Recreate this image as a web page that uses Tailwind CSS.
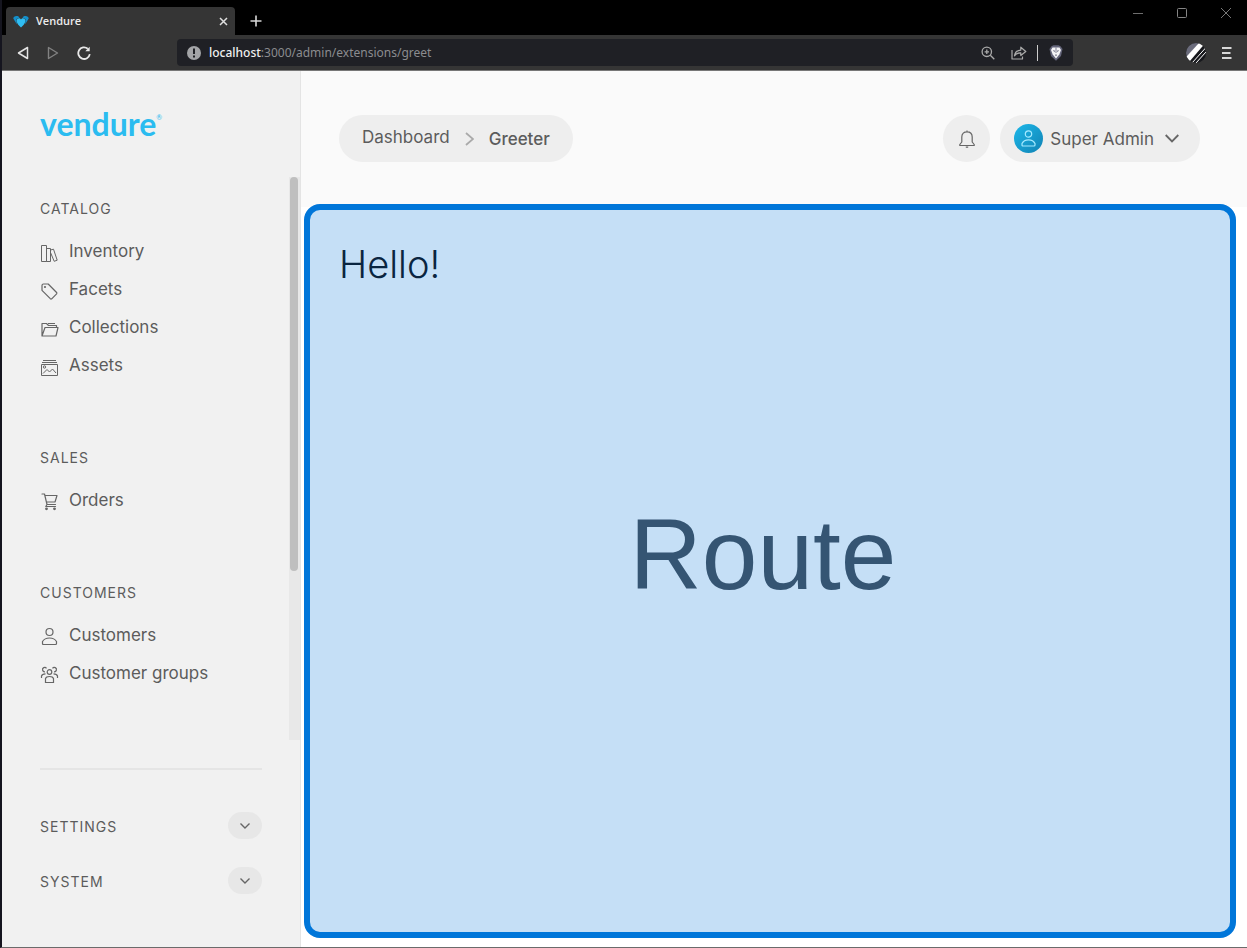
<!DOCTYPE html>
<html lang="en">
<head>
<meta charset="utf-8">
<meta name="viewport" content="width=device-width, initial-scale=1">
<title>Vendure</title>
<script src="https://cdn.jsdelivr.net/npm/@tailwindcss/browser@4"></script>
</head>
<body class="flex min-h-screen flex-col border-b border-l-2 border-b-[#6b6b6b] border-l-[#15151f] bg-white font-['Inter',sans-serif] text-[#5c5c5c]">

<!-- Browser window -->
<div class="flex h-[35px] shrink-0 bg-black text-[#d8d8d8]">
  <div class="ml-1 mt-[7px] flex w-[229px] items-center rounded-t-sm bg-[#353535] pr-[7px] pl-[7px]">
    <svg class="h-[13px] w-4" viewBox="0 0 16 13"><path d="M0.300 3.600C0.300 1.500 3 0.400 5.500 1.500L6.500 2.500 3.500 4 3.800 9.300Z" fill="#1390cc"/><path d="M15.700 3.600C15.700 1.500 13 0.400 10.500 1.500L9.500 2.500 12.500 4 12.200 9.300Z" fill="#1390cc"/><path d="M8 4.600C9 2.600 12 3 12.300 5.400C12.500 8.400 10 10.600 8 12.400C6 10.600 3.500 8.400 3.700 5.400C4 3 7 2.600 8 4.600Z" fill="#30bdf2"/></svg>
    <span class="ml-[7px] flex-1 font-['Open_Sans',sans-serif] text-[11px] font-semibold text-[#ececec]">Vendure</span>
    <button aria-label="Close tab"><svg class="size-[9px]" viewBox="0 0 9 9" fill="none" stroke="#e0e0e0" stroke-width="1.500"><path d="M1 1 8 8M8 1 1 8"/></svg></button>
  </div>
  <button class="ml-[15px] mt-[7px]" aria-label="New tab"><svg class="size-3" viewBox="0 0 12 12" fill="none" stroke="#d8d8d8" stroke-width="1.600"><path d="M6 0.500V11.500M0.500 6H11.500"/></svg></button>
  <div class="ml-auto flex h-[25px] items-center gap-[34px] pr-4">
    <button aria-label="Minimize"><svg class="size-[10px]" viewBox="0 0 10 10" fill="none" stroke="#6e6e6e"><path d="M0 5.500H10"/></svg></button>
    <button aria-label="Maximize"><svg class="size-[10px]" viewBox="0 0 10 10" fill="none" stroke="#858585"><rect x="0.500" y="0.500" width="9" height="9" rx="1"/></svg></button>
    <button aria-label="Close"><svg class="size-[10px]" viewBox="0 0 10 10" fill="none" stroke="#777"><path d="M0 0 10 10M10 0 0 10"/></svg></button>
  </div>
</div>
<div class="flex h-9 shrink-0 items-center border-b border-[#777] bg-[#353535]">
  <div class="flex w-[175px] items-center gap-[18px] pl-[15px]">
    <button aria-label="Back"><svg class="h-[14px] w-3" viewBox="0 0 12 14" fill="none" stroke="#e4e4e4" stroke-width="1.500" stroke-linejoin="round"><path d="M10.500 1.500V12.500L1.500 7Z"/></svg></button>
    <button aria-label="Forward"><svg class="h-[14px] w-3" viewBox="0 0 12 14" fill="none" stroke="#828282" stroke-width="1.400" stroke-linejoin="round"><path d="M1.500 1.500V12.500L10.500 7Z"/></svg></button>
    <button aria-label="Reload"><svg class="size-[14px]" viewBox="0 0 14 14" fill="none" stroke="#e8e8e8" stroke-width="1.800"><path d="M12.800 8.200A5.800 5.800 0 1 1 10.800 2.700"/><path d="M12.700 0.800V5.200H8.300Z" fill="#e8e8e8" stroke="none"/></svg></button>
  </div>
  <div class="flex h-[27px] flex-1 items-center rounded bg-[#1f2025] px-[10px]">
    <svg class="size-[14px]" viewBox="0 0 14 14"><circle cx="7" cy="7" r="7" fill="#a3a4a7"/><path d="M6 2.500H8V8H6ZM6 9.500H8V11.500H6Z" fill="#1f2025"/></svg>
    <span class="ml-2 flex-1 font-['Noto_Sans',sans-serif] text-[12px] text-[#8b8c8f]"><span class="font-medium text-[#f0f0f0]">localhost</span>:3000/admin/extensions/greet</span>
    <button aria-label="Zoom"><svg class="size-[14px]" viewBox="0 0 14 14" fill="none" stroke="#aaa" stroke-width="1.300"><circle cx="5.800" cy="5.800" r="4.700"/><path d="M9.300 9.300 13.300 13.300M3.600 5.800H8M5.800 3.600V8"/></svg></button>
    <button class="ml-4" aria-label="Share"><svg class="h-[14px] w-4" viewBox="0 0 16 14" fill="none" stroke="#aaa" stroke-width="1.200" stroke-linejoin="round"><path d="M1 4V13H11.500V10.500"/><path d="M3.500 9.800C4 6 6.500 4.200 9.800 4.100V1.200L14.800 5.500L9.800 9.500V6.800C7 6.700 5 7.600 3.500 9.800Z"/></svg></button>
    <span class="ml-[10px] h-4 w-px bg-[#ccc]"></span>
    <button class="ml-[11px]" aria-label="Brave Shields"><svg class="h-4 w-[14px]" viewBox="0 0 14 16"><path d="M2.500 1.200 4.500 0.300H9.500L11.500 1.200 13.500 4 12 11 7 15.800 2 11 0.500 4Z" fill="#63647a"/><path d="M3.500 2.500H10.500L12 5 10.300 9.500 7 13.500 3.700 9.500 2 5Z" fill="#f4f4f6"/><path d="M4 5 6 5.800 5.300 7.300ZM10 5 8 5.800 8.700 7.300ZM6 10 7 9.300 8 10 7 11.200ZM6.600 2.500H7.400V8H6.600Z" fill="#63647a"/></svg></button>
  </div>
  <div class="flex w-[174px] items-center justify-end gap-4 pr-[15px]">
    <button aria-label="Profile"><svg class="size-5" viewBox="0 0 20 20"><defs><clipPath id="disc"><circle cx="10" cy="10" r="10"/></clipPath></defs><g clip-path="url(#disc)"><path d="M0 0H20V20H0Z" fill="#17181c"/><path d="M0 0H14L0 14Z" fill="#6b6c7c"/><path d="M0 14 13 0 18.500 1 3.500 18.500Z" fill="#fff"/><path d="M6 20 20 4.500M10 20 20 9" stroke="#fff" stroke-width="1"/></g></svg></button>
    <button aria-label="Menu"><svg class="h-3 w-[10px]" viewBox="0 0 10 12" stroke="#d8d8d8" stroke-width="1.800"><path d="M0 1H9.500M0 6H8.500M0 11H9.500"/></svg></button>
  </div>
</div>

<!-- Application -->
<div class="flex flex-1">
  <aside class="flex w-[299px] shrink-0 flex-col border-r border-[#e4e4e4] bg-[#f1f1f1]">
    <a href="#" class="ml-[38px] mt-9 flex h-[70px] items-start self-start font-['Lato',sans-serif] text-[32px] leading-[34px] font-bold text-[#2bbcf0]" aria-label="Vendure home">vendure<span class="mt-1 text-[7px] leading-3 font-normal">®</span></a>
    <div class="flex h-[563px] justify-between">
      <nav class="pl-[38px] pt-[22px] text-[17px]">
        <section class="mb-[63px]">
          <h2 class="mb-[14px] text-[14px] leading-5 tracking-[1px]">CATALOG</h2>
          <ul>
            <li><a href="#" class="flex h-[38px] items-center gap-[10px]"><svg class="mt-0.5 size-[19px]" viewBox="0 0 19 19" fill="none" stroke="#666" stroke-linejoin="round"><path d="M1.500 1.500H6.500V17.500H1.500ZM6.500 4.500H10.500V17.500H6.500ZM10.500 6 13.500 5.200 17.200 16.200 14.200 17.300 10.500 8.500Z"/></svg>Inventory</a></li>
            <li><a href="#" class="flex h-[38px] items-center gap-[10px]"><svg class="mt-0.5 size-[19px]" viewBox="0 0 19 19" fill="none" stroke="#666" stroke-width="1.200" stroke-linejoin="round"><path d="M2 3.500Q2 2 3.500 2H8.200L16.600 10.500Q17.200 11.200 16.600 11.900L11.700 16.800Q11 17.300 10.300 16.700L2 8.300Z"/><circle cx="5" cy="5" r="0.500"/></svg>Facets</a></li>
            <li><a href="#" class="flex h-[38px] items-center gap-[10px]"><svg class="mt-0.5 size-[19px]" viewBox="0 0 19 19" fill="none" stroke="#666" stroke-width="1.200" stroke-linejoin="round"><path d="M2 16V3.500H6.500L8.500 5.500H16.500V7.500M2 16 5 7.500H18L16 16ZM8 3.500H15"/></svg>Collections</a></li>
            <li><a href="#" class="flex h-[38px] items-center gap-[10px]"><svg class="mt-0.5 size-[19px]" viewBox="0 0 19 19" fill="none" stroke="#666" stroke-linejoin="round"><path d="M1.500 6.500H17.500V17.500H1.500ZM2 4.500H17M3 2.500H16M3 15.500 7 11.500 9.500 14 12.500 11 16 15"/><circle cx="4.500" cy="9" r="1.200"/></svg>Assets</a></li>
          </ul>
        </section>
        <section class="mb-[63px]">
          <h2 class="mb-[14px] text-[14px] leading-5 tracking-[1px]">SALES</h2>
          <ul>
            <li><a href="#" class="flex h-[38px] items-center gap-[10px]"><svg class="size-[19px]" viewBox="0 0 19 19" fill="none" stroke="#666" stroke-width="1.200" stroke-linejoin="round" stroke-linecap="round"><path d="M2 2H4.500L7 12.500H15.500M5 3.500H17L15 10H6.500M7 12.500 5.800 14.500H15.500"/><circle cx="6.500" cy="16.800" r="0.800" fill="#666"/><circle cx="14.500" cy="16.800" r="0.800" fill="#666"/></svg>Orders</a></li>
          </ul>
        </section>
        <section>
          <h2 class="mb-[14px] text-[14px] leading-5 tracking-[1px]">CUSTOMERS</h2>
          <ul>
            <li><a href="#" class="flex h-[38px] items-center gap-[10px]"><svg class="size-[19px]" viewBox="0 0 19 19" fill="none" stroke="#666" stroke-width="1.200"><circle cx="9.500" cy="5" r="3.500"/><path d="M2.500 16.500V14.500C4 12 6.500 11 9.500 11S15 12 16.500 14.500V16.500Q16.500 17.500 15.500 17.500H3.500Q2.500 17.500 2.500 16.500Z"/></svg>Customers</a></li>
            <li><a href="#" class="flex h-[38px] items-center gap-[10px]"><svg class="size-[19px]" viewBox="0 0 19 19" fill="none" stroke="#666" stroke-width="1.200"><circle cx="9.500" cy="7" r="2.300"/><path d="M5.500 17.500V13.500Q6 11.500 9.500 11.500T13.500 13.500V17.500ZM6.500 3.300A2.200 2.200 0 1 0 5 6.800M12.500 3.300A2.200 2.200 0 1 1 14 6.800M1.500 13V11Q2 8.800 5.500 8.800M17.500 13V11Q17 8.800 13.500 8.800"/></svg>Customer groups</a></li>
          </ul>
        </section>
      </nav>
      <div class="w-[11px] bg-[#e8e8e8] px-px"><div class="h-[70%] w-2 rounded-full bg-[#bfbfbf]"></div></div>
    </div>
    <div class="mx-[38px] mt-7 border-t-2 border-[#e5e5e5] pt-[42px] text-[14px] leading-5 tracking-[1px]">
      <div class="flex items-center justify-between"><h2 class="pt-0.5">SETTINGS</h2>
        <button aria-label="Expand settings" class="flex h-[27px] w-[34px] items-center justify-center rounded-full bg-[#e7e7e7]"><svg class="h-[6px] w-[10px]" viewBox="0 0 10 6" fill="none" stroke="#666" stroke-width="1.400"><path d="M0.500 0.500 5 5 9.500 0.500"/></svg></button></div>
      <div class="mt-[28px] flex items-center justify-between"><h2 class="pt-0.5">SYSTEM</h2>
        <button aria-label="Expand system" class="flex h-[27px] w-[34px] items-center justify-center rounded-full bg-[#e7e7e7]"><svg class="h-[6px] w-[10px]" viewBox="0 0 10 6" fill="none" stroke="#666" stroke-width="1.400"><path d="M0.500 0.500 5 5 9.500 0.500"/></svg></button></div>
    </div>
  </aside>

  <main class="flex min-w-0 flex-1 flex-col">
    <header class="flex h-[136px] items-start justify-between bg-[#fafafa] pt-11 pr-[47px] pl-[38px] text-[17px]">
      <nav aria-label="Breadcrumb" class="flex h-[47px] items-center rounded-full bg-[#eee] px-[23px]">
        <a href="#" class="pb-px">Dashboard</a>
        <svg class="mx-[15px] h-[14px] w-[9px]" viewBox="0 0 9 14" fill="none" stroke="#aaa" stroke-width="1.800"><path d="M1 1 8 7 1 13"/></svg>
        <span class="pt-0.5 font-medium">Greeter</span>
      </nav>
      <div class="flex gap-[10px]">
        <button aria-label="Notifications" class="flex size-[47px] items-center justify-center rounded-full bg-[#eee]"><svg class="h-[18px] w-4" viewBox="0 0 16 18" fill="none" stroke="#666" stroke-width="1.200" stroke-linejoin="round"><path d="M8 0.500V1.500M0.800 15.500V14.500L2.800 12V7C2.800 3.500 5 1.800 8 1.800S13.200 3.500 13.200 7V12L15.200 14.500V15.500ZM6.800 17.200H9.200"/></svg></button>
        <button class="flex h-[47px] items-center rounded-full bg-[#eee] pr-[21px] pl-[14px]">
          <span class="flex size-[29px] items-center justify-center rounded-full bg-linear-to-br from-[#1cb8ea] to-[#1283b4]"><svg class="size-[17px]" viewBox="0 0 17 17" fill="none" stroke="#a5eaff" stroke-width="1.200"><circle cx="8.500" cy="4" r="3.200"/><path d="M2 15V13.500C3.200 11 5.500 9.800 8.500 9.800S13.800 11 15 13.500V15Q15 16 14 16H3Q2 16 2 15Z"/></svg></span>
          <span class="ml-[7px] pt-0.5">Super Admin</span>
          <svg class="ml-[11px] h-[9px] w-[14px]" viewBox="0 0 14 9" fill="none" stroke="#666" stroke-width="1.800"><path d="M0.700 1 7 7.500 13.300 1"/></svg>
        </button>
      </div>
    </header>
    <section class="relative -mt-[3px] mr-[11px] mb-[9px] ml-[3px] flex-1 rounded-2xl border-6 border-[#0076d9] bg-[#c5dff6] px-[29px] pt-[31px]">
      <h1 class="text-[38px] leading-[46px] font-light text-[#0a2540]">Hello!</h1>
      <div class="absolute inset-0 flex items-center justify-center pr-[14px] pb-[34px] font-['Liberation_Sans',sans-serif] text-[100px] leading-none text-[#355573]">Route</div>
    </section>
  </main>
</div>
</body>
</html>
